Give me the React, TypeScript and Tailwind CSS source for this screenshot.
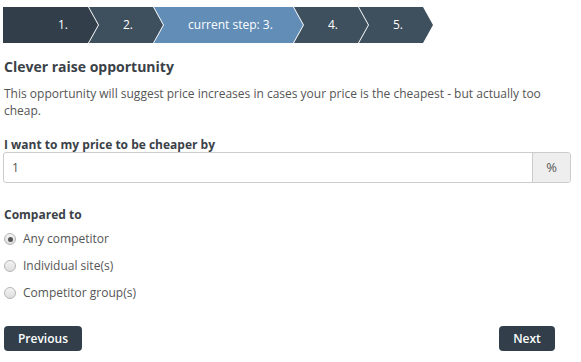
import { useState } from "react";

const steps = [
  { label: "1.", w: "w-[95px]", pl: "pl-[25px]", bg: "bg-[#323f4b]", first: true },
  { label: "2.", w: "w-[74px]", pl: "pl-[4px]", bg: "bg-[#3e4f5d]" },
  { label: "current step: 3.", w: "w-[149px]", pl: "pl-[4px]", bg: "bg-[#618db6]" },
  { label: "4.", w: "w-[74px]", pl: "pl-[4px]", bg: "bg-[#3e4f5d]" },
  { label: "5.", w: "w-[74px]", pl: "pl-[4px]", bg: "bg-[#3e4f5d]" },
];

const options = ["Any competitor", "Individual site(s)", "Competitor group(s)"];

function Radio({ checked }: { checked: boolean }) {
  return (
    <span className="flex h-[12px] w-[12px] items-center justify-center rounded-full border border-[#b5b5b5] bg-gradient-to-b from-[#f3f3f3] to-[#dedede]">
      {checked && <span className="h-[5px] w-[5px] rounded-full bg-[#555]" />}
    </span>
  );
}

export default function App() {
  const [selected, setSelected] = useState(0);

  return (
    <div className="min-h-screen bg-white font-['Open_Sans',sans-serif] text-[12px] text-[#555]">
      {/* Wizard steps */}
      <div className="flex pl-[3px] pt-[7px]">
        {steps.map((s, i) => (
          <div
            key={s.label}
            className={`${s.w} ${s.pl} ${s.bg} ${i > 0 ? "-ml-[9px]" : ""} flex h-[36px] items-center justify-center text-white`}
            style={{
              clipPath: s.first
                ? "polygon(0 0, calc(100% - 10px) 0, 100% 50%, calc(100% - 10px) 100%, 0 100%)"
                : "polygon(0 0, calc(100% - 10px) 0, 100% 50%, calc(100% - 10px) 100%, 0 100%, 10px 50%)",
            }}
          >
            {s.label}
          </div>
        ))}
      </div>

      <div className="pl-[4px] pr-[10px]">
        <h2 className="mt-[14px] text-[14px] font-bold leading-[20px] text-[#3b4148]">
          Clever raise opportunity
        </h2>
        <p className="mt-[8px] leading-[17px]">
          This opportunity will suggest price increases in cases your price is the cheapest - but actually too cheap.
        </p>

        <label className="mt-[17px] block font-bold leading-[17px] text-[#3b4148]">
          I want to my price to be cheaper by
        </label>
        <div className="-ml-[1px] -mt-[1px] flex h-[31px] rounded-[3px] border border-[#ccc]">
          <input
            defaultValue="1"
            className="min-w-0 flex-1 rounded-l-[3px] px-[8px] text-[12px] text-[#555] outline-none"
          />
          <span className="flex w-[38px] items-center justify-center rounded-r-[3px] border-l border-[#ccc] bg-[#eee] text-[13px]">
            %
          </span>
        </div>

        <div className="mt-[23px] font-bold leading-[18px] text-[#3b4148]">Compared to</div>
        <div className="mt-[6px] flex flex-col gap-[9px]">
          {options.map((o, i) => (
            <button
              key={o}
              onClick={() => setSelected(i)}
              className="flex h-[18px] items-center gap-[7px] text-left"
            >
              <Radio checked={selected === i} />
              <span>{o}</span>
            </button>
          ))}
        </div>

        <div className="mt-[24px] flex justify-between pr-[16px]">
          <button className="h-[25px] w-[78px] rounded-[4px] bg-[#323f4b] font-semibold text-white">
            Previous
          </button>
          <button className="h-[25px] w-[56px] rounded-[4px] bg-[#323f4b] font-semibold text-white">
            Next
          </button>
        </div>
      </div>
    </div>
  );
}
